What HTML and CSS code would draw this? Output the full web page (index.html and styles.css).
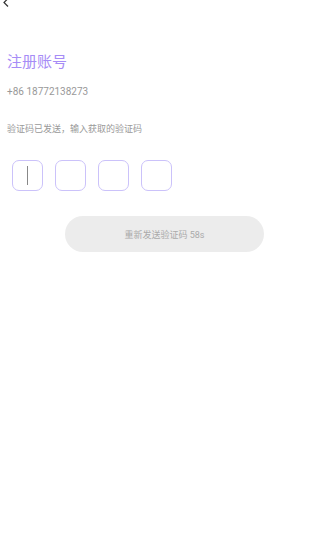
FILE: index.html
```html
<!DOCTYPE html>
<html lang="zh">
<head>
  <meta charset="UTF-8" />
  <meta name="viewport" content="width=device-width, initial-scale=1.0" />
  <title>注册账号</title>
  <link rel="stylesheet" href="styles.css">
</head>
<body>
  <header class="nav">
    <button class="back" type="button" aria-label="返回">
      <svg width="8" height="10" viewBox="0 0 8 10"><path d="M6 0.5 L2 4.5 L6 8.5" fill="none" stroke="#333" stroke-width="1.2"/></svg>
    </button>
  </header>
  <main class="page">
    <h1 class="title">注册账号</h1>
    <p class="phone">+86 18772138273</p>
    <p class="hint">验证码已发送，输入获取的验证码</p>
    <div class="code-row">
      <div class="code-box active"><span class="cursor"></span></div>
      <div class="code-box"></div>
      <div class="code-box"></div>
      <div class="code-box"></div>
    </div>
    <div class="actions">
      <button class="resend" type="button" disabled>重新发送验证码 58s</button>
    </div>
  </main>
</body>
</html>
```

FILE: styles.css
```css
html, body {
  margin: 0;
  padding: 0;
  background: #fff;
  font-family: Roboto, "Noto Sans CJK SC", sans-serif;
  color: #333;
}
.nav {
  height: 40px;
  position: relative;
}
.back {
  position: absolute;
  left: 2px;
  top: -2px;
  padding: 0;
  border: none;
  background: none;
  line-height: 0;
}
.page {
  padding: 0 7px;
}
.title {
  margin: 12px 0 0 0;
  font-size: 15px;
  line-height: 20px;
  font-weight: 400;
  color: #a68cf6;
}
.phone {
  margin: 13px 0 0 0;
  font-size: 10px;
  line-height: 14px;
  color: #999;
}
.hint {
  margin: 24px 0 0 0;
  font-size: 9px;
  line-height: 13px;
  color: #999;
}
.code-row {
  display: flex;
  gap: 12px;
  margin: 24px 0 0 5px;
}
.code-box {
  width: 29px;
  height: 29px;
  border: 1px solid #cbc2fa;
  border-radius: 7px;
  display: flex;
  align-items: center;
  justify-content: center;
}
.cursor {
  width: 1.5px;
  height: 19px;
  background: #888;
}
.actions {
  display: flex;
  justify-content: center;
  margin-top: 25px;
}
.resend {
  width: 199px;
  height: 36px;
  border: none;
  border-radius: 18px;
  background: #ececec;
  color: #aaa;
  font-family: Roboto, "Noto Sans CJK SC", sans-serif;
  font-size: 9px;
  padding: 0;
  margin-left: 9px;
}
```
